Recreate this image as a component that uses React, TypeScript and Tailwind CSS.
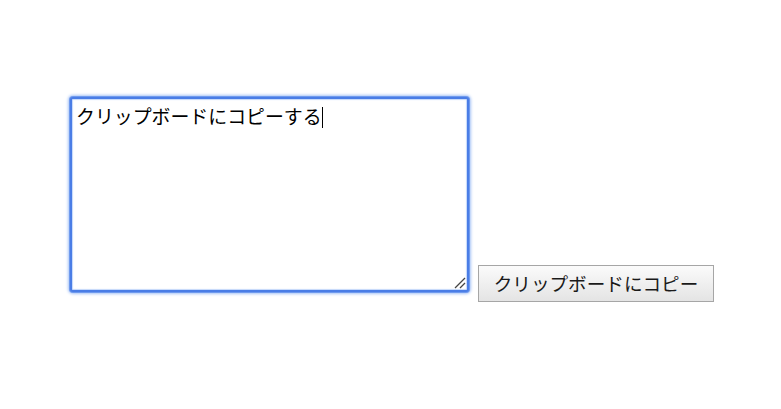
import React from 'react';

const font = { fontFamily: '"Noto Sans CJK JP", "Noto Sans", sans-serif' };

const ResizeGrip = () => (
    <svg className="absolute right-[1px] bottom-[1px]" width="13" height="13" viewBox="0 0 13 13">
        <line x1="12" y1="2" x2="2" y2="12" stroke="#444" strokeWidth="1.2" />
        <line x1="12" y1="7" x2="7" y2="12" stroke="#444" strokeWidth="1.2" />
    </svg>
);

const App: React.FC = () => {
    return (
        <div className="w-[781px] h-[409px] bg-white" style={font}>
            <div className="flex items-start pt-[97px] pl-[70px]">
                <div className="relative w-[399px] h-[195px] rounded-[3px] border-2 border-[#4a7de6] bg-white shadow-[0_0_0_1px_#6f9aee,0_0_3px_2px_#a8c4f6,inset_0_0_1px_1px_#c4d7fa]">
                    <p className="pl-[4px] pt-[5px] text-[18.9px] leading-[24px] text-black">
                        クリップボードにコピーする<span className="inline-block w-[1px] h-[21px] bg-black align-[-4px]" />
                    </p>
                    <ResizeGrip />
                </div>
                <button className="ml-[9px] mt-[168px] w-[236px] h-[37px] border border-[#a6a6a6] bg-gradient-to-b from-[#fbfbfb] to-[#e4e4e4] text-[18.6px] text-[#1a1a1a] leading-none">
                    クリップボードにコピー
                </button>
            </div>
        </div>
    );
};

export default App;
